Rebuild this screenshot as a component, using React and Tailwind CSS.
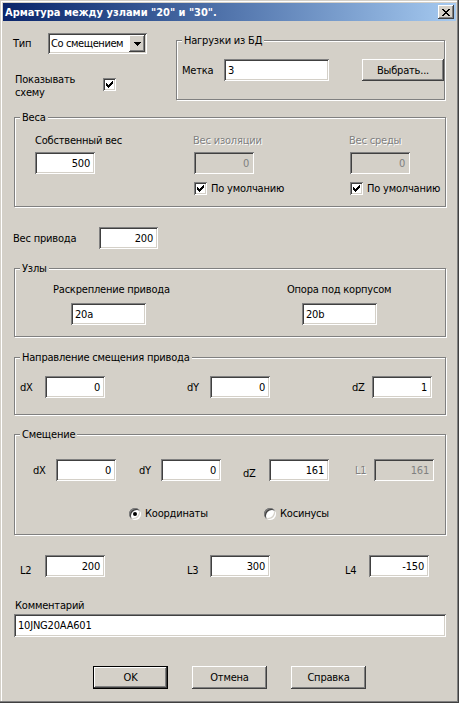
import React from "react";

const SUNKEN =
  "shadow-[inset_1px_1px_0_#808080,inset_-1px_-1px_0_#ffffff,inset_2px_2px_0_#404040,inset_-2px_-2px_0_#d4d0c8]";
const RAISED =
  "shadow-[inset_-1px_-1px_0_#404040,inset_1px_1px_0_#ffffff,inset_-2px_-2px_0_#808080,inset_2px_2px_0_#d4d0c8]";

function Edit({ w, h = "h-[22px]", value, left, disabled, className = "" }) {
  return (
    <div
      className={`${w} ${h} shrink-0 flex items-center whitespace-nowrap ${
        left ? "justify-start pl-[4px]" : "justify-end pr-[5px]"
      } ${disabled ? "bg-[#d4d0c8] text-[#808080]" : "bg-white text-black"} ${SUNKEN} ${className}`}
    >
      {value}
    </div>
  );
}

function Btn({ children, className = "", def }) {
  return (
    <div
      className={`flex items-center justify-center shrink-0 bg-[#d4d0c8] ${
        def ? "border border-black" : ""
      } ${className}`}
    >
      <div className={`w-full h-full flex items-center justify-center ${RAISED}`}>{children}</div>
    </div>
  );
}

function Check({ className = "" }) {
  return (
    <div className={`w-[13px] h-[13px] shrink-0 bg-white ${SUNKEN} ${className}`}>
      <svg width="13" height="13" viewBox="0 0 13 13" shapeRendering="crispEdges">
        <path
          fill="#000"
          d="M9 3h1v3h-1zM8 4h1v3h-1zM7 5h1v3h-1zM6 6h1v3h-1zM5 7h1v3h-1zM4 6h1v3h-1zM3 5h1v3h-1z"
        />
      </svg>
    </div>
  );
}

function Radio({ on }) {
  return (
    <div
      className={`w-[12px] h-[12px] shrink-0 rounded-full bg-white flex items-center justify-center shadow-[inset_1px_1px_0_#808080,inset_-1px_-1px_0_#ffffff,inset_2px_2px_0_#404040,inset_-2px_-2px_0_#d4d0c8]`}
    >
      {on ? <div className="w-[4px] h-[4px] rounded-full bg-black" /> : null}
    </div>
  );
}

function Group({ title, className = "", children }) {
  return (
    <div
      className={`relative shrink-0 border border-[#808080] shadow-[1px_1px_0_#ffffff,inset_1px_1px_0_#ffffff] ${className}`}
    >
      <span className="absolute left-[5px] top-[-7px] px-[2px] bg-[#d4d0c8] leading-[13px] whitespace-nowrap">
        {title}
      </span>
      {children}
    </div>
  );
}

const DIS = "text-[#808080] [text-shadow:1px_1px_0_#ffffff]";

export default function App() {
  return (
    <div className="w-[459px] h-[703px] overflow-hidden bg-[#d4d0c8] text-black text-[11px] leading-[13px] tracking-[-0.2px] font-['DejaVu_Sans_Condensed','Liberation_Sans',sans-serif] shadow-[inset_-1px_-1px_0_#404040,inset_-2px_-2px_0_#808080,inset_1px_1px_0_#d4d0c8,inset_2px_2px_0_#ffffff] flex flex-col">
      {/* Title bar */}
      <div className="mx-[3px] mt-[3px] h-[18px] shrink-0 flex items-center bg-linear-to-r from-[#0a246a] to-[#a6caf0]">
        <span className="pl-[2px] font-bold text-white whitespace-nowrap tracking-normal">
          Арматура между узлами "20" и "30".
        </span>
        <div className="ml-auto mr-[2px] w-[16px] h-[14px] bg-[#d4d0c8] flex items-center justify-center shadow-[inset_-1px_-1px_0_#404040,inset_1px_1px_0_#ffffff,inset_-2px_-2px_0_#808080,inset_2px_2px_0_#d4d0c8]">
          <svg width="8" height="7" viewBox="0 0 8 7" shapeRendering="crispEdges">
            <path
              fill="#000"
              d="M0 0h2v1H0zM6 0h2v1H6zM1 1h2v1H1zM5 1h2v1H5zM2 2h4v1H2zM3 3h2v1H3zM2 4h4v1H2zM1 5h2v1H1zM5 5h2v1H5zM0 6h2v1H0zM6 6h2v1H6z"
            />
          </svg>
        </div>
      </div>

      {/* Top section */}
      <div className="flex mt-[12px] shrink-0">
        <div className="w-[176px] pl-[13px] shrink-0">
          <div className="flex items-center h-[21px]">
            <span className="w-[35px]">Тип</span>
            <div className={`w-[99px] h-[21px] bg-white flex items-center pl-[3px] relative ${SUNKEN}`}>
              <span className="whitespace-nowrap tracking-[-0.4px]">Со смещением</span>
              <div className={`ml-auto mr-[2px] w-[16px] h-[17px] shrink-0 bg-[#d4d0c8] flex items-center justify-center ${RAISED}`}>
                <svg width="7" height="4" viewBox="0 0 7 4" shapeRendering="crispEdges">
                  <path fill="#000" d="M0 0h7v1H0zM1 1h5v1H1zM2 2h3v1H2zM3 3h1v1H3z" />
                </svg>
              </div>
            </div>
          </div>
          <div className="flex mt-[19px] pl-[2px]">
            <span className="w-[88px]">
              Показывать
              <br />
              схему
            </span>
            <Check className="mt-[5px]" />
          </div>
        </div>
        <Group title="Нагрузки из БД" className="w-[269px] h-[60px] mt-[7px]">
          <div className="flex items-center pt-[18px] pl-[5px]">
            <span className="w-[42px]">Метка</span>
            <Edit w="w-[105px]" left value="3" />
            <Btn className="ml-[33px] w-[82px] h-[22px]">Выбрать...</Btn>
          </div>
        </Group>
      </div>

      {/* Веса */}
      <Group title="Веса" className="ml-[14px] mt-[17px] w-[432px] h-[90px]">
        <div className="flex pt-[16px]">
          <div className="w-[179px] pl-[20px] shrink-0">
            <div className="whitespace-nowrap">Собственный вес</div>
            <Edit w="w-[60px]" value="500" className="mt-[5px]" />
          </div>
          <div className="w-[156px] shrink-0">
            <div className={`whitespace-nowrap -ml-[1px] ${DIS}`}>Вес изоляции</div>
            <Edit w="w-[60px]" value="0" disabled className="mt-[5px]" />
            <div className="flex items-center mt-[8px]">
              <Check />
              <span className="ml-[4px] whitespace-nowrap">По умолчанию</span>
            </div>
          </div>
          <div className="shrink-0">
            <div className={`whitespace-nowrap -ml-[1px] ${DIS}`}>Вес среды</div>
            <Edit w="w-[60px]" value="0" disabled className="mt-[5px]" />
            <div className="flex items-center mt-[8px]">
              <Check />
              <span className="ml-[4px] whitespace-nowrap">По умолчанию</span>
            </div>
          </div>
        </div>
      </Group>

      {/* Вес привода */}
      <div className="flex items-center mt-[20px] pl-[13px] shrink-0">
        <span className="w-[86px]">Вес привода</span>
        <Edit w="w-[59px]" value="200" />
      </div>

      {/* Узлы */}
      <Group title="Узлы" className="ml-[14px] mt-[19px] w-[432px] h-[69px]">
        <div className="flex pt-[14px]">
          <div className="w-[272px] pl-[38px] shrink-0">
            <div className="whitespace-nowrap">Раскрепление привода</div>
            <Edit w="w-[75px]" left value="20a" className="mt-[7px] ml-[18px]" />
          </div>
          <div className="shrink-0">
            <div className="whitespace-nowrap">Опора под корпусом</div>
            <Edit w="w-[75px]" left value="20b" className="mt-[7px] ml-[15px]" />
          </div>
        </div>
      </Group>

      {/* Направление смещения привода */}
      <Group title="Направление смещения привода" className="ml-[14px] mt-[20px] w-[432px] h-[58px]">
        <div className="flex items-center pt-[18px] pl-[5px]">
          <span className="w-[25px]">dX</span>
          <Edit w="w-[60px]" value="0" />
          <span className="w-[23px] ml-[82px]">dY</span>
          <Edit w="w-[60px]" value="0" />
          <span className="w-[20px] ml-[82px]">dZ</span>
          <Edit w="w-[60px]" value="1" />
        </div>
      </Group>

      {/* Смещение */}
      <Group title="Смещение" className="ml-[14px] mt-[19px] w-[432px] h-[101px]">
        <div className="flex items-center pt-[24px] pl-[18px]">
          <span className="w-[23px]">dX</span>
          <Edit w="w-[60px]" value="0" />
          <span className="w-[22px] ml-[23px]">dY</span>
          <Edit w="w-[60px]" value="0" />
          <span className="w-[26px] ml-[22px] mt-[6px]">dZ</span>
          <Edit w="w-[60px]" value="161" />
          <span className={`w-[19px] ml-[26px] ${DIS}`}>L1</span>
          <Edit w="w-[60px]" value="161" disabled />
        </div>
        <div className="flex items-center mt-[26px] pl-[114px] h-[13px]">
          <div className="w-[135px] flex items-center shrink-0">
            <Radio on />
            <span className="ml-[4px] whitespace-nowrap">Координаты</span>
          </div>
          <div className="flex items-center">
            <Radio />
            <span className="ml-[4px] whitespace-nowrap">Косинусы</span>
          </div>
        </div>
      </Group>

      {/* L row */}
      <div className="flex items-center mt-[20px] pl-[20px] shrink-0">
        <span className="w-[25px] mt-[8px]">L2</span>
        <Edit w="w-[60px]" value="200" />
        <span className="w-[23px] ml-[82px] mt-[8px]">L3</span>
        <Edit w="w-[60px]" value="300" />
        <span className="w-[24px] ml-[75px] mt-[8px]">L4</span>
        <Edit w="w-[60px]" value="-150" />
      </div>

      {/* Комментарий */}
      <div className="mt-[22px] pl-[15px] shrink-0">Комментарий</div>
      <Edit w="w-[432px]" h="h-[23px]" left value="10JNG20AA601" className="ml-[14px] mt-[2px]" />

      {/* Buttons */}
      <div className="flex mt-[29px] pl-[93px] shrink-0">
        <Btn def className="w-[75px] h-[23px]">OK</Btn>
        <Btn className="w-[75px] h-[23px] ml-[24px]">Отмена</Btn>
        <Btn className="w-[75px] h-[23px] ml-[24px]">Справка</Btn>
      </div>
    </div>
  );
}
